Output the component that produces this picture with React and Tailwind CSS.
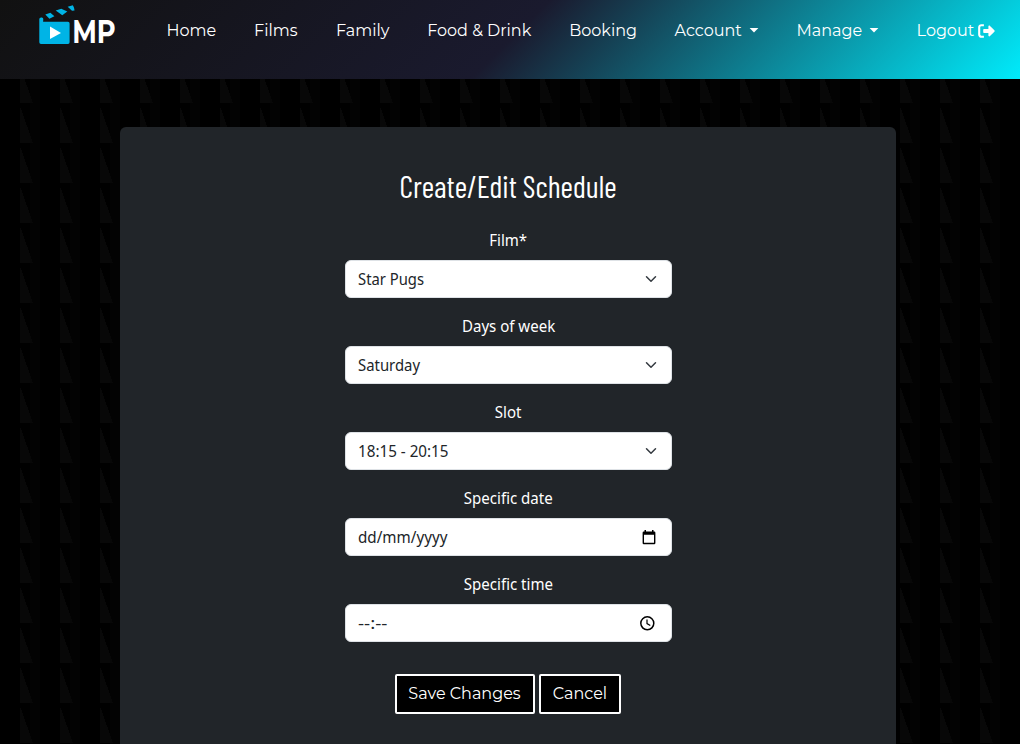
import React from "react";

const NAV = [
  { label: "Home", width: "w-[87.5px]" },
  { label: "Films", width: "w-[82px]" },
  { label: "Family", width: "w-[91.2px]" },
  { label: "Food & Drink", width: "w-[142px]" },
  { label: "Booking", width: "w-[105.4px]" },
  { label: "Account", width: "w-[122px]", caret: true },
  { label: "Manage", width: "w-[120px]", caret: true },
  { label: "Logout", width: "w-[80px]", exit: true },
];

function Logo() {
  return (
    <svg width="120" height="54" viewBox="0 -2 120 54" className="shrink-0">
      <g fill="#00b4e6">
        <path d="M1.3 13.3a1.8 1.8 0 0 1 1.8-1.8h.7a1.5 1.5 0 0 1 1.5 1.5l-.2 2.8H30a1.6 1.6 0 0 1 1.6 1.6v18.900a1.6 1.6 0 0 1-1.6 1.6H3a1.7 1.7 0 0 1-1.7-1.7z" />
        <path d="M7.3 8.400l5.100-1.600 4 3.400-5 2.600z" />
        <path d="M17.7 4.500l5.600-1.800 6 2.900-5 3.700z" />
        <path d="M29.7.8L34.800-.8c1 1.600 1.600 3.500 1.700 5.300l-2.500.2z" />
      </g>
      <path d="M12 20.600v12.500l11-6.200z" fill="#fff" />
      <text
        x="34.2"
        y="36.8"
        fill="#fff"
        fontFamily="Montserrat, sans-serif"
        fontWeight="700"
        fontSize="33"
        textLength="43.5"
        lengthAdjust="spacingAndGlyphs"
      >
        MP
      </text>
    </svg>
  );
}

function Header() {
  return (
    <header className="flex h-[79px] items-start bg-[linear-gradient(135deg,#111111_0%,#1a1a2e_50%,#00ebfb_100%)] pl-[38px]">
      <div className="w-[128.5px] pt-1">
        <Logo />
      </div>
      <nav className="flex pt-[19px] font-['Montserrat',sans-serif] text-[16px] leading-6 text-white">
        {NAV.map((n) => (
          <a key={n.label} className={`flex shrink-0 items-center ${n.width}`}>
            <span className="shrink-0 whitespace-nowrap">{n.label}</span>
            {n.caret && (
              <svg width="10" height="5" viewBox="0 0 10 5" className="mb-px ml-[7px]">
                <path d="M.6 0h8.8L5 4.6z" fill="#fff" />
              </svg>
            )}
            {n.exit && (
              <svg width="17" height="14" viewBox="0 0 17 14" className="mb-px ml-[4px] shrink-0">
                <path d="M5.9 1.2H3.4A2.2 2.2 0 0 0 1.2 3.4v7.2a2.2 2.2 0 0 0 2.2 2.2h2.5" fill="none" stroke="#fff" strokeWidth="2.1" />
                <path d="M6 4.900h4.400V2.500c0-.8 1-1.2 1.600-.6l4.400 4.400c.4.4.4 1 0 1.4L12 12.1c-.6.6-1.6.2-1.6-.6V9.100H6c-.4 0-.8-.4-.8-.8V5.700c0-.4.4-.8.8-.8z" fill="#fff" />
              </svg>
            )}
          </a>
        ))}
      </nav>
    </header>
  );
}

const Chevron = () => (
  <svg width="16" height="12" viewBox="0 0 16 16">
    <path d="m2 5 6 6 6-6" fill="none" stroke="#343a40" strokeWidth="2" strokeLinecap="round" strokeLinejoin="round" />
  </svg>
);

const CalendarIcon = () => (
  <svg width="14" height="15" viewBox="0 0 14 15" className="mr-[3px]">
    <path d="M2.5 0h1.500v1.500h6V0h1.500v1.500H12.200a1.200 1.200 0 0 1 1.200 1.200v10.300a1.200 1.200 0 0 1-1.200 1.200H1.800A1.200 1.200 0 0 1 .6 13V2.700A1.200 1.200 0 0 1 1.800 1.500h.7zM2 4.800v8h10v-8z" fill="#000" fillRule="evenodd" />
  </svg>
);

const ClockIcon = () => (
  <svg width="16" height="16" viewBox="0 0 16 16" className="mr-[4px]">
    <circle cx="8.3" cy="8.3" r="6.5" fill="none" stroke="#000" strokeWidth="1.5" />
    <path d="M8 4.500v4.100l3.300 2" fill="none" stroke="#000" strokeWidth="1.2" />
  </svg>
);

const FIELDS = [
  { label: "Film*", value: "Star Pugs", Icon: Chevron, scale: "scale-x-[0.925]" },
  { label: "Days of week", value: "Saturday", Icon: Chevron, scale: "scale-x-[0.93]" },
  { label: "Slot", value: "18:15 - 20:15", Icon: Chevron, scale: "scale-x-[0.95]" },
  { label: "Specific date", value: "dd/mm/yyyy", Icon: CalendarIcon, scale: "scale-x-[0.95]" },
  { label: "Specific time", value: "--:--", Icon: ClockIcon, scale: "scale-x-[1.18]" },
];

function Field({ label, value, Icon, scale }) {
  return (
    <div className="mb-4 flex flex-col">
      <span className="mb-2 text-center leading-6 text-white">
        <span className="inline-block scale-x-[0.94]">{label}</span>
      </span>
      <div className="flex h-[38px] items-center justify-between rounded-[6px] border border-[#dee2e6] bg-white px-3 leading-6 text-[#212529]">
        <span className={`origin-left ${scale}`}>{value}</span>
        <Icon />
      </div>
    </div>
  );
}

export default function App() {
  return (
    <div className="h-[744px] overflow-hidden bg-black">
      <Header />
      <main className="flex h-[665px] justify-center bg-[linear-gradient(250.6deg,transparent_76%,#080808_76%),linear-gradient(90deg,transparent_25%,#030303_25%,#030303_50%,transparent_50%)] bg-[length:40px_40px] bg-[position:20px_24px] pr-1 pt-12">
        <section className="flex h-[680px] w-[776px] flex-col items-center rounded-[6px] bg-[#212529] pt-10 font-['Segoe_UI','Noto_Sans',sans-serif] text-[16px]">
          <h1 className="mb-[23px] whitespace-nowrap font-['Barlow_Condensed',sans-serif] text-[30.4px] leading-[38px] text-white">
            Create/Edit Schedule
          </h1>
          <form className="ml-px w-[327px]">
            {FIELDS.map((f) => (
              <Field key={f.label} {...f} />
            ))}
            <div className="-ml-[2px] flex justify-center gap-1 pt-4 font-['Montserrat',sans-serif] text-[16px] text-white">
              <button type="button" className="flex h-10 w-[140px] shrink-0 items-center justify-center rounded-[2px] border-2 border-white bg-black">
                <span className="whitespace-nowrap">Save Changes</span>
              </button>
              <button type="button" className="flex h-10 w-[82px] shrink-0 items-center justify-center rounded-[2px] border-2 border-white bg-black pl-px">
                <span className="whitespace-nowrap">Cancel</span>
              </button>
            </div>
          </form>
        </section>
      </main>
    </div>
  );
}
